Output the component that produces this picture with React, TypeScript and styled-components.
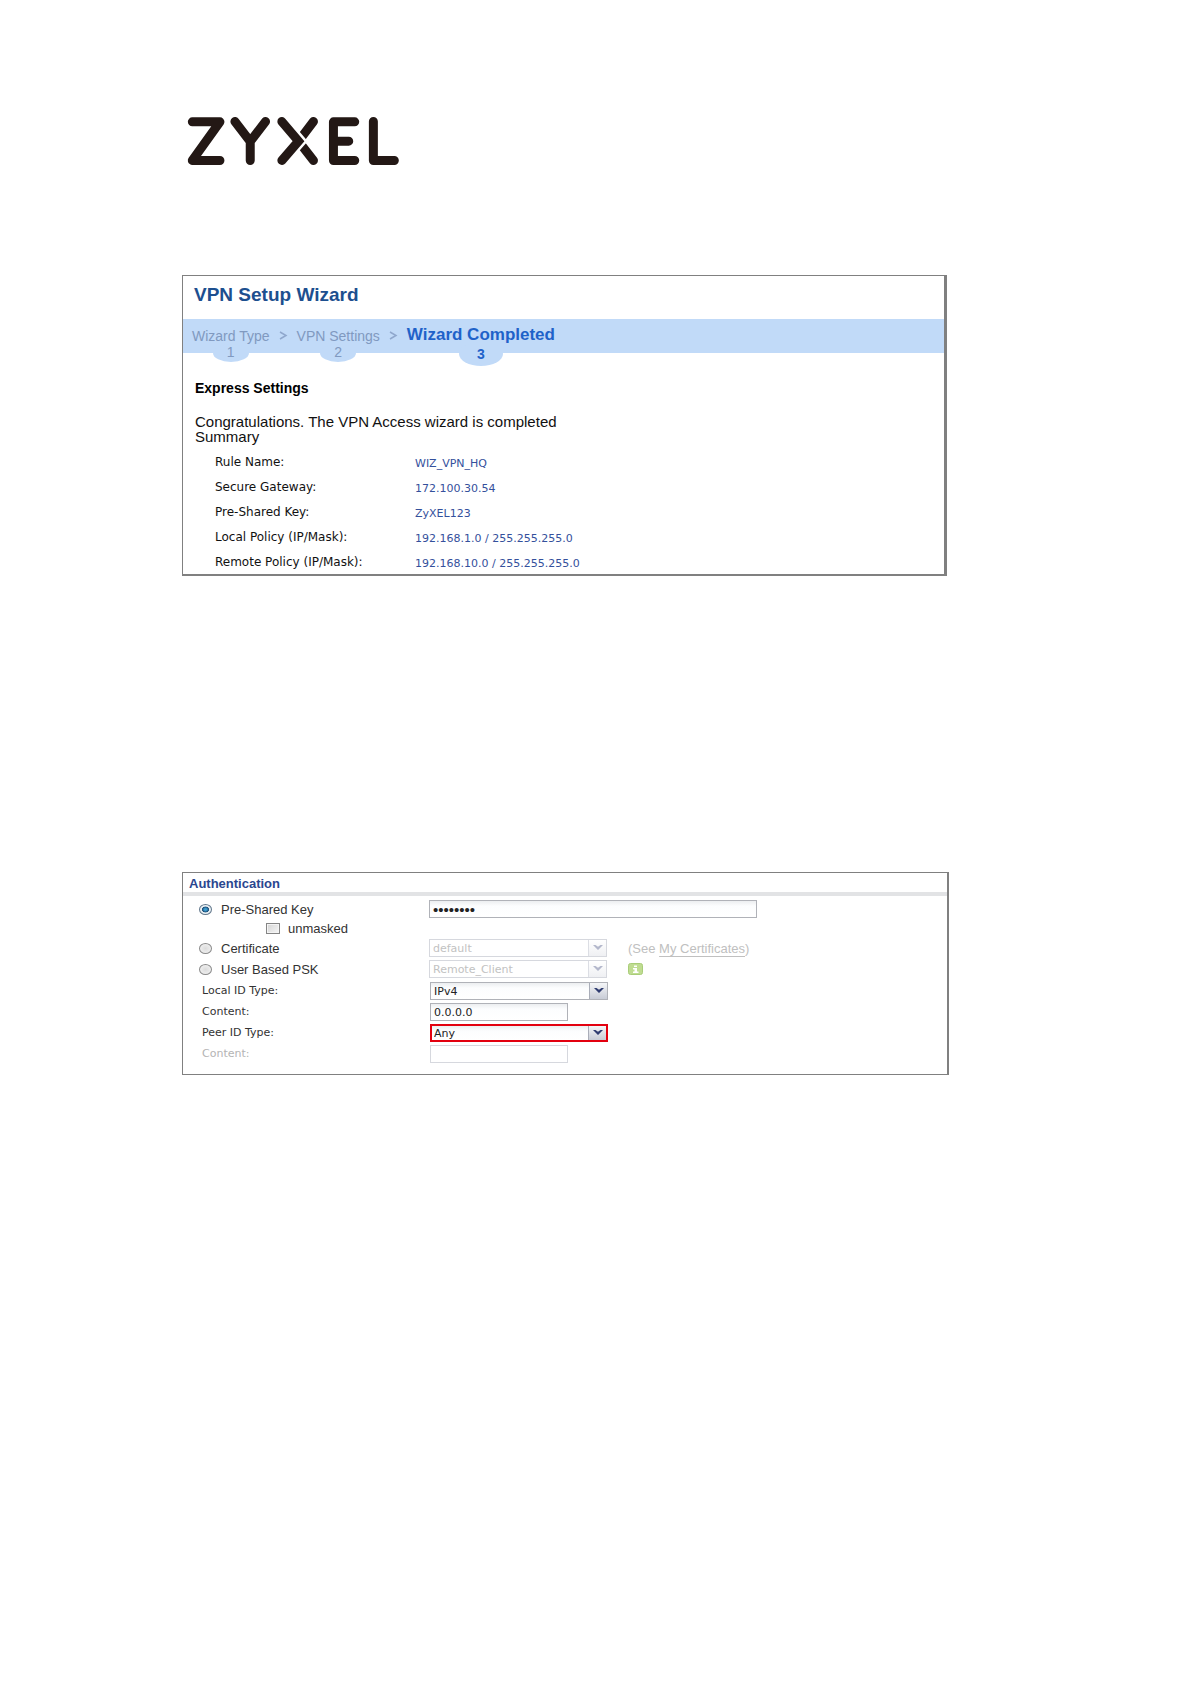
import React from "react";
import styled, { createGlobalStyle, css } from "styled-components";

const sans = `"Liberation Sans", Arial, sans-serif`;
const wide = `"DejaVu Sans", Verdana, sans-serif`;

const GlobalStyle = createGlobalStyle`
  *, *::before, *::after { box-sizing: border-box; }
  body { margin: 0; background: #fff; font-family: ${sans}; color: #111; }
`;

const Page = styled.main`
  display: flex;
  flex-direction: column;
  padding: 117px 242px 96px 182px;
`;

const Logo = styled.svg`
  display: block;
  width: 211px;
  height: 48px;
  margin: 0 6px 110px;
  overflow: visible;
  fill: none;
  stroke: #231815;
  stroke-width: 27;
  stroke-linecap: round;
  stroke-linejoin: round;
`;

const WizardPanel = styled.section`
  margin: 0 2px 296px 0;
  border: 1px solid #808080;
  border-width: 1px 3px 2px 1px;
`;

const WizardTitle = styled.h1`
  margin: 0;
  padding: 0 11px;
  font-size: 19px;
  line-height: 38px;
  height: 43px;
  color: #1d4f8f;
`;

const Steps = styled.ol`
  display: flex;
  align-items: flex-start;
  gap: 9px;
  height: 34px;
  margin: 0;
  padding: 9px 9px 0;
  list-style: none;
  background: #c1daf8;
`;

const Step = styled.li<{ $active?: boolean }>`
  display: flex;
  flex-direction: column;
  align-items: center;
  font-size: ${(p) => (p.$active ? 17 : 14)}px;
  font-weight: ${(p) => (p.$active ? 700 : 400)};
  line-height: ${(p) => (p.$active ? 14 : 16)}px;
  white-space: nowrap;
  color: ${(p) => (p.$active ? "#1f62c9" : "#8099c0")};
`;

const StepNumber = styled.span<{ $active?: boolean }>`
  width: ${(p) => (p.$active ? 44 : 36)}px;
  height: ${(p) => (p.$active ? 24 : 18)}px;
  border-radius: 50%;
  background: #c1daf8;
  text-align: center;
  font-size: 14px;
  line-height: ${(p) => (p.$active ? 24 : 16)}px;
`;

const Separator = styled.li`
  display: flex;
  align-items: center;
  height: 14px;
`;

const WizardBody = styled.div`
  padding: 27px 12px 0;
`;

const SectionName = styled.h2`
  margin: 0 0 18px;
  font-size: 14px;
  line-height: 16px;
  color: #000;
`;

const Message = styled.p`
  margin: 0 0 5px;
  font-size: 15px;
  line-height: 15px;
`;

const Summary = styled.dl`
  display: grid;
  grid-template-columns: 200px 1fr;
  grid-auto-rows: 25px;
  margin: 0;
  padding-left: 20px;
  font-family: ${wide};
  font-size: 12px;
  line-height: 26px;
`;

const Value = styled.dd`
  margin: 0;
  font-size: 11px;
  line-height: 30px;
  color: #34509c;
`;

const AuthPanel = styled.section`
  border: 1px solid #808080;
  border-right-width: 2px;
`;

const AuthTitle = styled.h2`
  margin: 0;
  padding: 2px 6px 0;
  font-size: 13px;
  line-height: 17px;
  color: #2a468f;
  border-bottom: 4px solid #e2e3e5;
`;

const Form = styled.form`
  display: flex;
  flex-direction: column;
  gap: 3px;
  padding: 4px 0 11px;
`;

const IdGroup = styled.div`
  display: flex;
  flex-direction: column;
  gap: 3px;
  padding-top: 1px;
`;

const Row = styled.div<{ $compact?: boolean }>`
  display: grid;
  grid-template-columns: 246px 1fr;
  align-items: center;
  height: ${(p) => (p.$compact ? 15 : 18)}px;
`;

const Choice = styled.label<{ $nested?: boolean }>`
  display: flex;
  align-items: center;
  gap: ${(p) => (p.$nested ? 8 : 9)}px;
  padding-left: ${(p) => (p.$nested ? 83 : 16)}px;
  font-size: 13px;
  line-height: 15px;
  color: #333;
`;

const FieldLabel = styled.label<{ $muted?: boolean }>`
  padding-left: 19px;
  font-family: ${wide};
  font-size: 11px;
  line-height: 18px;
  color: ${(p) => (p.$muted ? "#b4b4b4" : "#333")};
`;

const Radio = styled.input`
  appearance: none;
  width: 13px;
  height: 11px;
  margin: 0;
  border: 1px solid #8b8b8b;
  border-radius: 50%;
  background: radial-gradient(#dcdcdc, #f5f5f5);
  &:checked {
    border-color: #62788c;
    background: radial-gradient(closest-side, #3d9ed0 20%, #1c4f7a 58%, #e8eef2 72%);
  }
`;

const Checkbox = styled.input`
  appearance: none;
  width: 14px;
  height: 11px;
  margin: 0;
  border: 1px solid #858585;
  background: linear-gradient(135deg, #d4d4d4, #f6f6f6);
  box-shadow: inset 0 0 0 1px #f4f4f4;
`;

const Controls = styled.div`
  display: flex;
  align-items: center;
  gap: 21px;
  font-size: 13px;
  color: #c0c0c0;
`;

const field = css`
  appearance: none;
  height: 18px;
  margin: 0;
  padding: 0 3px;
  border: 1px solid #b0b2b8;
  border-radius: 0;
  background: linear-gradient(#eceef0, #fcfdfe 5px, #fff);
  font-family: ${wide};
  font-size: 11px;
  color: #222;
  outline: none;
  &:disabled {
    border-color: #d6d8de;
    background: #fff;
    color: #c2c2c2;
    opacity: 1;
  }
`;

const TextBox = styled.input`
  ${field}
  width: 138px;
  margin-left: 1px;
`;

const PasswordBox = styled.input`
  ${field}
  width: 328px;
  font-family: ${sans};
  font-size: 15px;
`;

const SelectFrame = styled.span<{ $shifted?: boolean }>`
  position: relative;
  display: flex;
  width: 178px;
  margin-left: ${(p) => (p.$shifted ? 1 : 0)}px;
`;

const SelectBox = styled.select<{ $alert?: boolean }>`
  ${field}
  width: 100%;
  ${(p) =>
    p.$alert &&
    css`
      border: 2px solid #e3000f;
      padding: 0 2px;
    `}
`;

const Trigger = styled.span<{ $muted?: boolean; $alert?: boolean }>`
  position: absolute;
  top: ${(p) => (p.$alert ? 2 : 1)}px;
  right: ${(p) => (p.$alert ? 2 : 1)}px;
  bottom: ${(p) => (p.$alert ? 2 : 1)}px;
  display: flex;
  align-items: center;
  justify-content: center;
  width: 18px;
  border-left: 1px solid ${(p) => (p.$muted ? "#dcdee4" : "#a9adb8")};
  background: ${(p) =>
    p.$muted ? "linear-gradient(#fff, #eff0f3)" : "linear-gradient(#f5f6f8, #c8ccd6)"};
  color: ${(p) => (p.$muted ? "#b3b7cb" : "#2f3c70")};
  pointer-events: none;
`;

const HelpLink = styled.a`
  color: inherit;
  text-decoration: underline;
  text-underline-offset: 3px;
`;

const InfoButton = styled.button`
  display: flex;
  width: 15px;
  height: 12px;
  padding: 0;
  border: 0;
  background: none;
`;

function Chevron() {
  return (
    <Separator aria-hidden="true">
      <svg width="9" height="9" viewBox="0 0 9 9" fill="none" stroke="#8fa7cd" strokeWidth="1.5">
        <path d="M1 1 L7 4.5 L1 8" />
      </svg>
    </Separator>
  );
}

type DropDownProps = {
  id: string;
  value: string;
  label?: string;
  disabled?: boolean;
  alert?: boolean;
  shifted?: boolean;
};

function DropDown({ id, value, label, disabled, alert, shifted }: DropDownProps) {
  return (
    <SelectFrame $shifted={shifted}>
      <SelectBox id={id} aria-label={label} disabled={disabled} $alert={alert} defaultValue={value}>
        <option>{value}</option>
      </SelectBox>
      <Trigger $muted={disabled} $alert={alert}>
        <svg width="10" height="6" viewBox="0 0 10 6" fill="currentColor">
          <path d="M0 0 H2.5 L5 1.8 L7.5 0 H10 L5 5 Z" />
        </svg>
      </Trigger>
    </SelectFrame>
  );
}

const summary = [
  ["Rule Name:", "WIZ_VPN_HQ"],
  ["Secure Gateway:", "172.100.30.54"],
  ["Pre-Shared Key:", "ZyXEL123"],
  ["Local Policy (IP/Mask):", "192.168.1.0 / 255.255.255.0"],
  ["Remote Policy (IP/Mask):", "192.168.10.0 / 255.255.255.0"],
];

export default function App() {
  return (
    <>
      <GlobalStyle />
      <Page>
        <Logo viewBox="53 52 634 143" role="img" aria-label="Zyxel">
          <path d="M66 66 H149 L66 182 H149" />
          <path d="M194 65 L240 125 L286 65 M240 125 V182" />
          <path d="M430 65 L385 124 L430 182" />
          <path
            d="M345 77 L385 124 L345 170"
            stroke="#fff"
            strokeWidth="42"
            strokeLinecap="butt"
            strokeLinejoin="miter"
          />
          <path d="M335 65 L385 124 L335 182" strokeLinejoin="miter" />
          <path d="M554 66 H490 V182 H554 M490 124 H536" />
          <path d="M610 65 V182 H673" />
        </Logo>

        <WizardPanel>
          <WizardTitle>VPN Setup Wizard</WizardTitle>
          <Steps>
            <Step>
              Wizard Type
              <StepNumber>1</StepNumber>
            </Step>
            <Chevron />
            <Step>
              VPN Settings
              <StepNumber>2</StepNumber>
            </Step>
            <Chevron />
            <Step $active aria-current="step">
              Wizard Completed
              <StepNumber $active>3</StepNumber>
            </Step>
          </Steps>
          <WizardBody>
            <SectionName>Express Settings</SectionName>
            <Message>
              Congratulations. The VPN Access wizard is completed
              <br />
              Summary
            </Message>
            <Summary>
              {summary.map(([name, value]) => (
                <React.Fragment key={name}>
                  <dt>{name}</dt>
                  <Value>{value}</Value>
                </React.Fragment>
              ))}
            </Summary>
          </WizardBody>
        </WizardPanel>

        <AuthPanel>
          <AuthTitle>Authentication</AuthTitle>
          <Form>
            <Row>
              <Choice>
                <Radio type="radio" name="method" defaultChecked />
                Pre-Shared Key
              </Choice>
              <Controls>
                <PasswordBox type="password" aria-label="Pre-Shared Key" defaultValue="ZyXEL123" />
              </Controls>
            </Row>
            <Row $compact>
              <Choice $nested>
                <Checkbox type="checkbox" />
                unmasked
              </Choice>
            </Row>
            <Row>
              <Choice>
                <Radio type="radio" name="method" />
                Certificate
              </Choice>
              <Controls>
                <DropDown id="certificate" label="Certificate" value="default" disabled />
                <span>
                  (See <HelpLink href="#certificates">My Certificates</HelpLink>)
                </span>
              </Controls>
            </Row>
            <Row>
              <Choice>
                <Radio type="radio" name="method" />
                User Based PSK
              </Choice>
              <Controls>
                <DropDown id="user-psk" label="User Based PSK" value="Remote_Client" disabled />
                <InfoButton type="button" aria-label="Information">
                  <svg width="15" height="12" viewBox="0 0 15 12">
                    <rect x="0.5" y="0.5" width="14" height="11" rx="2" fill="#bfdc91" stroke="#a9cd78" />
                    <path d="M6 2.5 H9 V4 H6 Z M5 5 H9 V8.5 H10.5 V10 H5 V8.5 H6.5 V6.5 H5 Z" fill="#fff" />
                  </svg>
                </InfoButton>
              </Controls>
            </Row>
            <IdGroup>
              <Row>
                <FieldLabel htmlFor="local-type">Local ID Type:</FieldLabel>
                <DropDown id="local-type" value="IPv4" shifted />
              </Row>
              <Row>
                <FieldLabel htmlFor="local-content">Content:</FieldLabel>
                <TextBox id="local-content" defaultValue="0.0.0.0" />
              </Row>
              <Row>
                <FieldLabel htmlFor="peer-type">Peer ID Type:</FieldLabel>
                <DropDown id="peer-type" value="Any" alert shifted />
              </Row>
              <Row>
                <FieldLabel htmlFor="peer-content" $muted>
                  Content:
                </FieldLabel>
                <TextBox id="peer-content" disabled />
              </Row>
            </IdGroup>
          </Form>
        </AuthPanel>
      </Page>
    </>
  );
}
